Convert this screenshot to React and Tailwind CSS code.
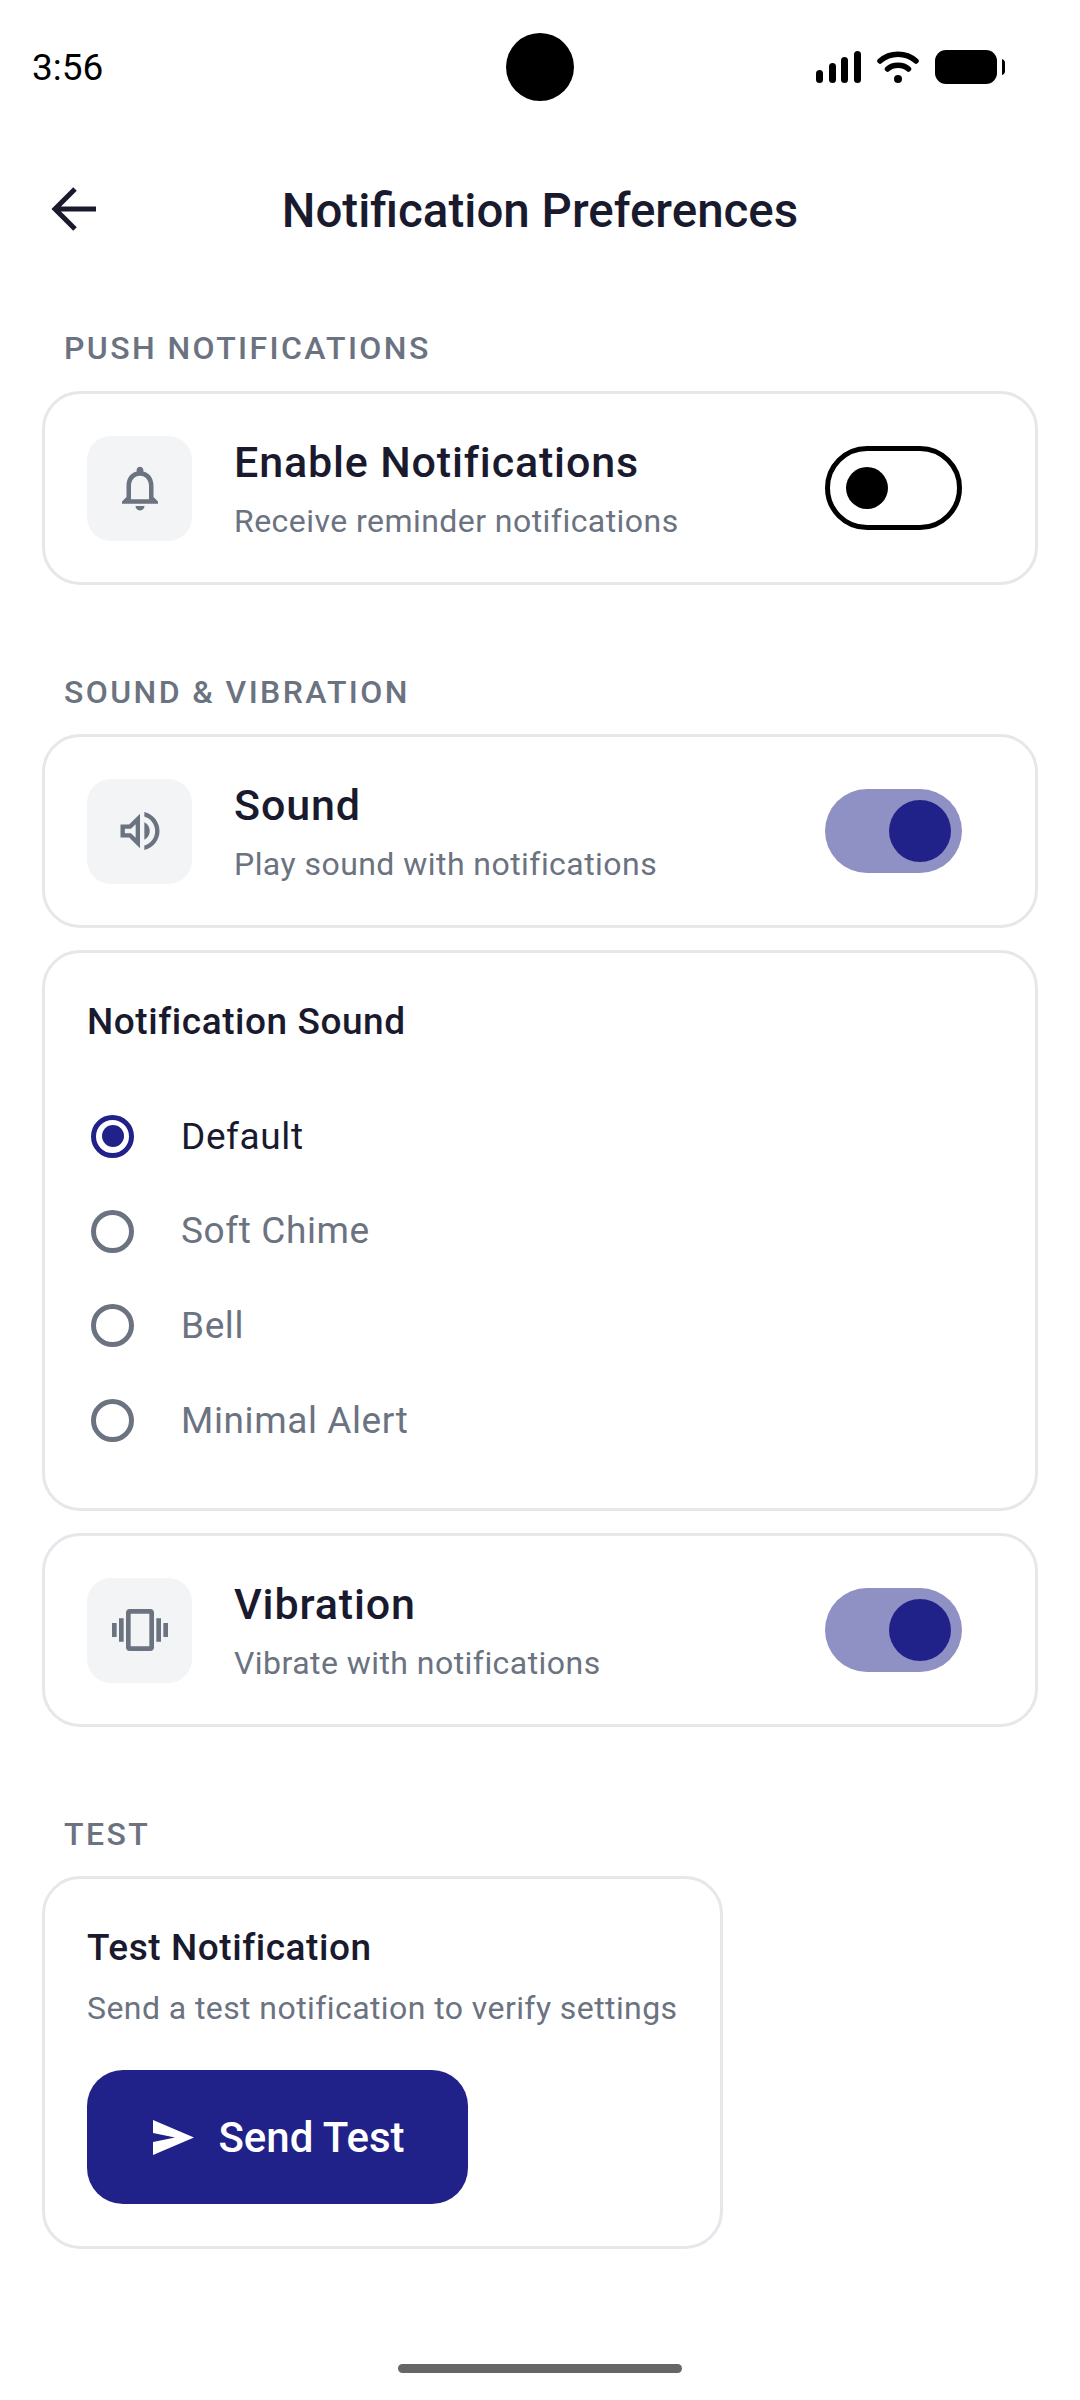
import React from "react";
import { MdNotificationsNone, MdOutlineVolumeUp, MdOutlineVibration } from "react-icons/md";

function SectionLabel({ children, className = "" }) {
  return (
    <div className={`ml-[64px] text-[32px] leading-[36px] font-medium tracking-[2.4px] text-[#6b7280] ${className}`}>
      {children}
    </div>
  );
}

function Toggle({ on }) {
  if (on) {
    return (
      <div className="w-[137px] h-[84px] rounded-full bg-[#8f90c4] flex items-center justify-end pr-[11px]">
        <div className="w-[62px] h-[62px] rounded-full bg-[#212289]" />
      </div>
    );
  }
  return (
    <div className="w-[137px] h-[84px] rounded-full border-[5px] border-black bg-white flex items-center pl-[16px]">
      <div className="w-[42px] h-[42px] rounded-full bg-black" />
    </div>
  );
}

function SettingRow({ icon, title, sub, on, className = "" }) {
  return (
    <div className={`mx-[42px] rounded-[38px] border-[3px] border-[#e5e7eb] bg-white flex items-center pl-[42px] pr-[73px] ${className}`}>
      <div className="w-[105px] h-[105px] rounded-[24px] bg-[#f3f4f6] flex items-center justify-center text-[#6b7280]">
        {icon}
      </div>
      <div className="ml-[42px] flex-1">
        <div className="text-[43px] leading-[50px] font-medium tracking-[0.85px] text-[#1a1a2e]">{title}</div>
        <div className="mt-[15px] text-[32px] leading-[38px] tracking-[0.45px] text-[#6b7280]">{sub}</div>
      </div>
      <Toggle on={on} />
    </div>
  );
}

function Radio({ label, selected }) {
  return (
    <div className="h-[94.7px] flex items-center pl-[4px]">
      <div className={`w-[43px] h-[43px] rounded-full border-[5px] flex items-center justify-center ${selected ? "border-[#212289]" : "border-[#6b7280]"}`}>
        {selected && <div className="w-[22px] h-[22px] rounded-full bg-[#212289]" />}
      </div>
      <span className={`ml-[47px] text-[37px] tracking-[0.6px] ${selected ? "text-[#1a1a2e]" : "text-[#6b7280]"}`}>{label}</span>
    </div>
  );
}

export default function App() {
  return (
    <div className="w-[1080px] h-[2400px] bg-white flex flex-col overflow-hidden font-['Roboto',sans-serif]">
      {/* status bar */}
      <div className="h-[134px] pl-[32px] pr-[75px] flex items-center justify-between relative">
        <span className="mt-[2px] text-[37px] text-black">3:56</span>
        <div className="absolute left-[506px] top-[33px] w-[68px] h-[68px] rounded-full bg-black" />
        <div className="flex items-center gap-[16px]">
          <svg width="45" height="32" viewBox="0 0 45 32" fill="black">
            <rect x="0" y="19" width="7" height="13" rx="3.5" />
            <rect x="13" y="12" width="7" height="20" rx="3.5" />
            <rect x="25" y="6" width="7" height="26" rx="3.5" />
            <rect x="38" y="0" width="7" height="32" rx="3.5" />
          </svg>
          <svg width="42" height="32" viewBox="0 0 42 32" fill="none" stroke="black" strokeWidth="5.5" strokeLinecap="round">
            <path d="M3 10 C13 1 29 1 39 10" />
            <path d="M10.5 18 C16 13 26 13 31.5 18" />
            <circle cx="21" cy="28" r="4" fill="black" stroke="none" />
          </svg>
          <svg width="70" height="34" viewBox="0 0 70 34" fill="black">
            <rect x="0" y="0" width="62" height="34" rx="11" />
            <path d="M67 9 Q70 10 70 13 L70 21 Q70 24 67 25 Z" />
          </svg>
        </div>
      </div>

      {/* header */}
      <div className="h-[150px] relative flex items-center justify-center">
        <svg className="absolute left-[50px] top-[51px]" width="48" height="48" viewBox="0 0 48 48" fill="none" stroke="#1a1a2e" strokeWidth="5">
          <path d="M46 24 H5" />
          <path d="M25 4 L5 24 L25 44" />
        </svg>
        <h1 className="mt-[3px] text-[47.5px] leading-[56px] font-medium text-[#1a1a2e]">Notification Preferences</h1>
      </div>

      <SectionLabel className="mt-[46px]">PUSH NOTIFICATIONS</SectionLabel>
      <SettingRow className="mt-[25px] h-[194px]" icon={<MdNotificationsNone size={54} />} title="Enable Notifications" sub="Receive reminder notifications" on={false} />

      <SectionLabel className="mt-[89px]">SOUND &amp; VIBRATION</SectionLabel>
      <SettingRow className="mt-[24px] h-[194px]" icon={<MdOutlineVolumeUp size={52} />} title="Sound" sub="Play sound with notifications" on />

      <div className="mx-[42px] mt-[22px] h-[561px] rounded-[38px] border-[3px] border-[#e5e7eb] bg-white pl-[42px] pt-[47px]">
        <div className="text-[37px] leading-[44px] font-medium tracking-[0.55px] text-[#1a1a2e]">Notification Sound</div>
        <div className="mt-[45px] flex flex-col">
          <Radio label="Default" selected />
          <Radio label="Soft Chime" />
          <Radio label="Bell" />
          <Radio label="Minimal Alert" />
        </div>
      </div>

      <SettingRow className="mt-[22px] h-[194px]" icon={<MdOutlineVibration size={56} />} title="Vibration" sub="Vibrate with notifications" on />

      <SectionLabel className="mt-[89px]">TEST</SectionLabel>
      <div className="ml-[42px] mt-[24px] w-[681px] h-[373px] rounded-[38px] border-[3px] border-[#e5e7eb] bg-white pl-[42px] pt-[47px]">
        <div className="text-[37px] leading-[44px] font-medium tracking-[0.55px] text-[#1a1a2e]">Test Notification</div>
        <div className="mt-[19px] text-[32px] leading-[38px] tracking-[0.42px] text-[#6b7280] whitespace-nowrap">Send a test notification to verify settings</div>
        <button className="mt-[43px] w-[381px] h-[134px] rounded-[36px] bg-[#212289] flex items-center justify-center gap-[24px] pl-[3px] text-white">
          <svg width="41" height="35" viewBox="0 0 41 35" fill="white">
            <path d="M0 0 L41 17.5 L0 35 L0 22 L22 17.5 L0 13 Z" />
          </svg>
          <span className="text-[42px] font-medium">Send Test</span>
        </button>
      </div>

      <div className="mt-auto mb-[27px] mx-auto w-[284px] h-[9px] rounded-full bg-[#666666]" />
    </div>
  );
}
